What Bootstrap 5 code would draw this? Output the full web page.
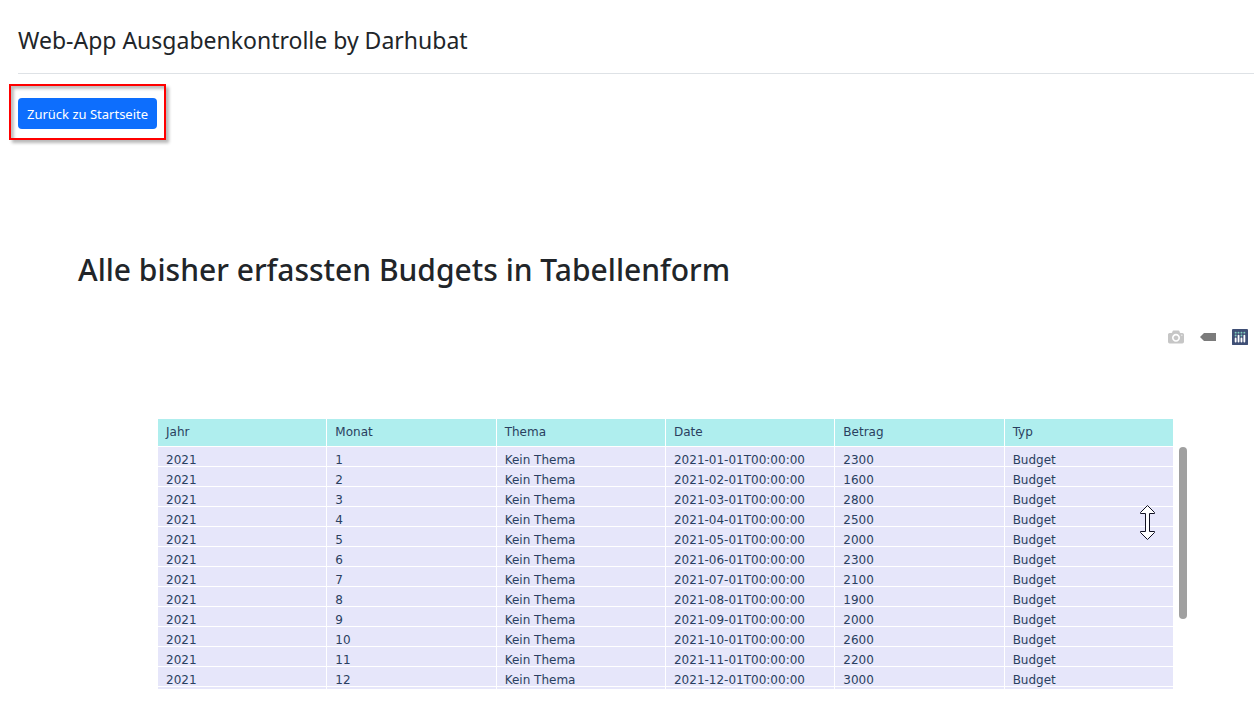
<!DOCTYPE html>
<html lang="de">
<head>
<meta charset="utf-8">
<meta name="viewport" content="width=device-width, initial-scale=1">
<title>Web-App Ausgabenkontrolle</title>
<link href="https://cdn.jsdelivr.net/npm/bootstrap@5.3.0/dist/css/bootstrap.min.css" rel="stylesheet">
<style>
  body { font-family: "Noto Sans", sans-serif; }
  .page-body { padding-left: 18px; }
  .app-title { font-size: 23px; line-height: 33px; padding: 24px 0 16px; border-bottom: 1px solid #dee2e6; }
  .back-frame { border: 2px solid #f00; padding: 12px 7px 9px; margin: 10px 0 0 -9px; box-shadow: 3px 3px 3px rgba(0,0,0,.28), inset 3px 3px 3px rgba(0,0,0,.25); }
  .back-frame .btn { font-size: 13px; line-height: 21px; padding: 6px 9px 4px; background: #0d6efd; border: 0; }
  .report { padding: 110px 0 0 60px; }
  .report h1 { font-size: 30px; line-height: 40px; font-weight: 500; }
  .tools { gap: 16px; padding-right: 6px; margin-top: 39px; }
  .tools button { line-height: 0; color: #7b7b7b; }
  .tools .faded { color: #c6c6c6; }
  .plot-area { margin: 74px 80px 0; }
  .budget { table-layout: fixed; border-collapse: separate; border-spacing: 0; font: 12px/16px "DejaVu Sans", sans-serif; color: #2a3f5f; }
  .budget th, .budget td { border-right: 1px solid #fff; border-bottom: 1px solid #fff; padding: 7px 8px 0; line-height: 12px; font-weight: 400; white-space: nowrap; }
  .budget th { background: #afeeee; padding: 4px 8px 5px; line-height: 18px; }
  .budget td { background: #e6e6fa; }
  .budget .next-row td { height: 2px; padding: 0; border-bottom: 0; line-height: 0; }
  .scroll-thumb { top: 28px; left: calc(100% + 5px); width: 8px; height: 172px; border-radius: 4px; background: #a0a0a0; }
  .pointer { top: 86px; right: 18px; }
</style>
</head>
<body>
<main class="page-body">
  <header><div class="app-title">Web-App Ausgabenkontrolle by Darhubat</div></header>
  <div class="back-frame d-inline-block"><button type="button" class="btn btn-primary btn-sm d-block">Zurück zu Startseite</button></div>
  <section class="report">
    <h1 class="m-0">Alle bisher erfassten Budgets in Tabellenform</h1>
    <div class="tools d-flex justify-content-end">
      <button type="button" class="faded border-0 bg-transparent p-0" aria-label="Bild speichern"><svg width="16" height="16" viewBox="0 0 1000 1000" fill="currentColor"><path transform="matrix(1 0 0 -1 0 850)" d="m500 450c-83 0-150-67-150-150 0-83 67-150 150-150 83 0 150 67 150 150 0 83-67 150-150 150z m400 150h-120c-16 0-34 13-39 29l-31 93c-6 15-23 28-40 28h-340c-16 0-34-13-39-28l-31-94c-6-15-23-28-40-28h-120c-55 0-100-45-100-100v-450c0-55 45-100 100-100h800c55 0 100 45 100 100v450c0 55-45 100-100 100z m-400-550c-138 0-250 112-250 250 0 138 112 250 250 250 138 0 250-112 250-250 0-138-112-250-250-250z m365 380c-19 0-35 16-35 35 0 19 16 35 35 35 19 0 35-16 35-35 0-19-16-35-35-35z"/></svg></button>
      <button type="button" class="border-0 bg-transparent p-0" aria-label="Nächster Datenpunkt"><svg width="16" height="16" viewBox="0 0 1500 1000" fill="currentColor"><path transform="matrix(1 0 0 -1 0 850)" d="m375 725l0 0-375-375 375-374 0-1 1125 0 0 750-1125 0z"/></svg></button>
      <button type="button" class="border-0 bg-transparent p-0" aria-label="Plotly"><svg width="16" height="16" viewBox="0 0 132 132"><rect width="132" height="132" rx="4" fill="#3f4f75"/><g fill="#80cfbe"><circle cx="78" cy="54" r="8"/><circle cx="102" cy="30" r="8"/><circle cx="78" cy="30" r="8"/><circle cx="54" cy="30" r="8"/><circle cx="30" cy="30" r="8"/><circle cx="30" cy="54" r="8"/></g><g stroke="#fff" stroke-width="15" stroke-linecap="round"><path d="M30 78v26M54 54v50M78 78v26M102 54v50"/></g></svg></button>
    </div>
    <div class="plot-area position-relative">
      <table class="budget w-100">
        <thead><tr><th>Jahr</th><th>Monat</th><th>Thema</th><th>Date</th><th>Betrag</th><th>Typ</th></tr></thead>
        <tbody>
          <tr><td>2021</td><td>1</td><td>Kein Thema</td><td>2021-01-01T00:00:00</td><td>2300</td><td>Budget</td></tr>
          <tr><td>2021</td><td>2</td><td>Kein Thema</td><td>2021-02-01T00:00:00</td><td>1600</td><td>Budget</td></tr>
          <tr><td>2021</td><td>3</td><td>Kein Thema</td><td>2021-03-01T00:00:00</td><td>2800</td><td>Budget</td></tr>
          <tr><td>2021</td><td>4</td><td>Kein Thema</td><td>2021-04-01T00:00:00</td><td>2500</td><td>Budget</td></tr>
          <tr><td>2021</td><td>5</td><td>Kein Thema</td><td>2021-05-01T00:00:00</td><td>2000</td><td>Budget</td></tr>
          <tr><td>2021</td><td>6</td><td>Kein Thema</td><td>2021-06-01T00:00:00</td><td>2300</td><td>Budget</td></tr>
          <tr><td>2021</td><td>7</td><td>Kein Thema</td><td>2021-07-01T00:00:00</td><td>2100</td><td>Budget</td></tr>
          <tr><td>2021</td><td>8</td><td>Kein Thema</td><td>2021-08-01T00:00:00</td><td>1900</td><td>Budget</td></tr>
          <tr><td>2021</td><td>9</td><td>Kein Thema</td><td>2021-09-01T00:00:00</td><td>2000</td><td>Budget</td></tr>
          <tr><td>2021</td><td>10</td><td>Kein Thema</td><td>2021-10-01T00:00:00</td><td>2600</td><td>Budget</td></tr>
          <tr><td>2021</td><td>11</td><td>Kein Thema</td><td>2021-11-01T00:00:00</td><td>2200</td><td>Budget</td></tr>
          <tr><td>2021</td><td>12</td><td>Kein Thema</td><td>2021-12-01T00:00:00</td><td>3000</td><td>Budget</td></tr>
          <tr class="next-row" aria-hidden="true"><td></td><td></td><td></td><td></td><td></td><td></td></tr>
        </tbody>
      </table>
      <div class="scroll-thumb position-absolute"></div>
      <svg class="pointer position-absolute" width="17" height="36" viewBox="0 0 17 36" fill="#fff" stroke="#112" aria-hidden="true"><path d="M8.500 .5 15.500 7.500v1h-5v18h5v1L8.500 34.500 1.500 27.500v-1h5v-18h-5v-1Z"/></svg>
    </div>
  </section>
</main>
<script src="https://cdn.jsdelivr.net/npm/bootstrap@5.3.0/dist/js/bootstrap.bundle.min.js"></script>
</body>
</html>
